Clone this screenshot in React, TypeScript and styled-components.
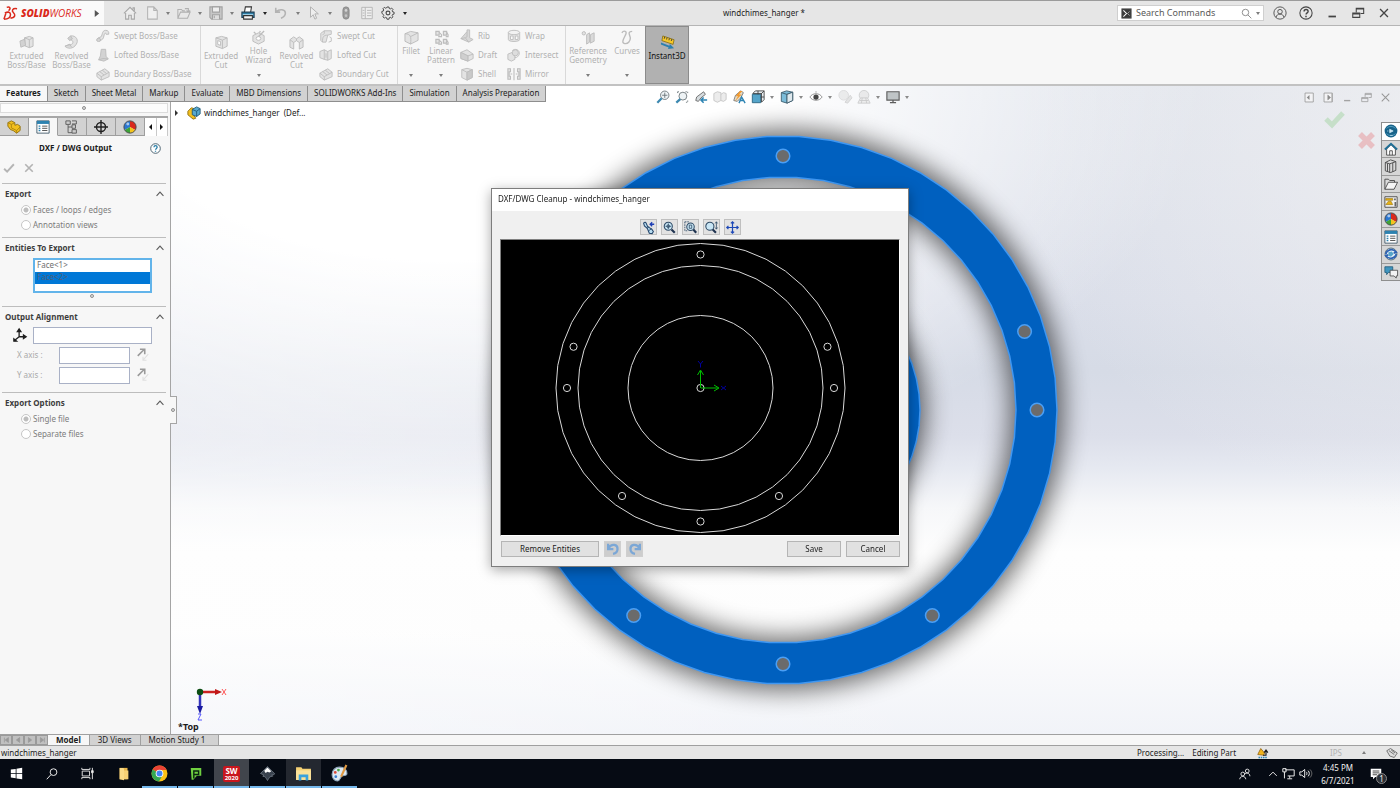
import React from "react";
import styled, { createGlobalStyle } from "styled-components";

const Global = createGlobalStyle`
  *, *::before, *::after { box-sizing: border-box; }
  html, body { margin: 0; }
  body { font: 8px/10px "Noto Sans", "Open Sans", sans-serif; color: #1c1c1c; background: #e6e6e6; }
  button, input, ul, h1, h2, fieldset { font: inherit; color: inherit; margin: 0; padding: 0; border: 0; }
  button { background: none; }
  ul { list-style: none; }
`;

/* ---------- drawings ---------- */

const Glyph = styled.svg<{ $s?: number }>`
  display: block;
  flex: none;
  width: ${(p) => p.$s ?? 14}px;
  height: ${(p) => p.$s ?? 14}px;
  fill: none;
  overflow: visible;
`;

const D = "#bcbcbc";
const L = "#e3e3e3";

const art: Record<string, React.ReactNode> = {
  home: <path d="M1 8.5 8 1.5l7 7M3 8v7h3.500v-4.500h3V15H13V8M11.500 4V2h1.500v3.500" stroke="#a6a6a6" fill="#ededed" strokeWidth="1.200" />,
  page: <path d="M3 1h7l4 4v10H3zM10 1v4h4" stroke="#b4b4b4" fill="#efefef" strokeWidth="1.200" />,
  openFolder: <path d="M1 14V4h4l1.500 1.500H9M1 14l3-7h11l-3 7zM9 3h4v3m-2-1 2 2 2-2" stroke="#b0b0b0" fill="#e8e8e8" strokeWidth="1.200" />,
  save: <g stroke="#a2a2a2" strokeWidth="1.200"><path d="M1 1h14v14H3l-2-2z" fill="#c6c6c6" /><path d="M4 1h8v6H4z" fill="#eee" /><path d="M4 15v-5h8v5M6 11v3" fill="#ddd" /></g>,
  print: <g strokeWidth="1.200"><path d="M4 7 5 1h7l-1 6" fill="#fff" stroke="#333" /><path d="M1 7h14v6H1z" fill="#2e7ea6" stroke="#1f3f55" /><path d="M2 10h12" stroke="#bfe2f2" /><path d="M3 11h10v4H3z" fill="#f7f7f7" stroke="#333" /></g>,
  undo: <path d="M2 2v5h5M2.500 6.500C6 3 13 3.500 13 8c0 4-3 5-5 6" stroke="#b3b3b3" strokeWidth="1.800" />,
  cursor: <path d="M4 1v12l3-3 2 5 2-1-2-5h4z" stroke="#b0b0b0" fill="#eee" strokeWidth="1.100" />,
  pill: <g><rect x="4.500" y="1" width="7" height="14" rx="3.500" fill="#9c9c9c" stroke="#858585" /><circle cx="8" cy="5" r="1.500" fill="#d5d5d5" /><circle cx="8" cy="11" r="1.500" fill="#c4c4c4" /></g>,
  listPage: <g stroke="#b2b2b2"><path d="M2 1.500h12v13H2z" fill="#eee" /><path d="M6 1.500v13M3 5h2M3 8h2M3 11h2M8 5h5M8 8h5M8 11h5" /></g>,
  gear: <g stroke="#4a4a4a" strokeWidth="1.300"><path d="M6.700 1h2.600l.4 1.900 1.400.6 1.700-1.100 1.800 1.800-1.100 1.700.6 1.400 1.900.4v2.600l-1.900.4-.6 1.400 1.100 1.700-1.800 1.800-1.700-1.100-1.400.6-.4 1.900H6.700l-.4-1.900-1.400-.6-1.700 1.100-1.800-1.800 1.100-1.700-.6-1.400L0 9.300V6.700l1.900-.4.6-1.400-1.100-1.700 1.800-1.800 1.700 1.100 1.400-.6z" transform="translate(1 .3) scale(.87)" /><circle cx="8" cy="8" r="2.200" /></g>,
  user: <g stroke="#555" strokeWidth="1.100"><circle cx="8" cy="8" r="7" /><circle cx="8" cy="6.500" r="2.600" /><path d="M3.500 13c.5-5 8.500-5 9 0" /></g>,
  help: <g stroke="#444" strokeWidth="1.200"><circle cx="8" cy="8" r="7" /><path d="M5.800 6.200c0-3 4.600-3 4.600 0 0 1.700-2.300 1.700-2.300 3.600" strokeWidth="1.600" /><path d="M8 11.200v1.600" strokeWidth="1.700" /></g>,
  helpBlue: <g stroke="#3f5866" strokeWidth="1.300"><circle cx="8" cy="8" r="7" fill="#fff" /><path d="M5.800 6.200c0-3 4.600-3 4.600 0 0 1.700-2.300 1.700-2.300 3.600M8 11.200v1.700" stroke="#2a7fa8" strokeWidth="1.900" /></g>,
  min: <path d="M4 12h8.500" stroke="#444" strokeWidth="2" />,
  restore: <path d="M2 8h8v5H2zM2 9h8M6 7V2.500h8.500v6H11M6 3.500h8.500" stroke="#444" strokeWidth="1.200" />,
  close: <path d="m3.500 3.500 9 9m0-9-9 9" stroke="#444" strokeWidth="1.500" />,
  minL: <path d="M3 12.500h9" stroke="#a3a3a3" strokeWidth="2" />,
  restoreL: <path d="M1 8h9v6H1zM1 9.500h9M6 7V2h9v6h-4M6 3.500h9" stroke="#9a9a9a" strokeWidth="1.100" />,
  closeL: <path d="m2.500 2.500 11 11m0-11-11 11" stroke="#979797" strokeWidth="1.500" />,
  paneL: <g><path d="M1.500 1.500h12v13h-12z" stroke="#999" strokeWidth="1.200" fill="#f3f3f5" /><path d="M8 4.500v7L4 8z" fill="#888" /></g>,
  paneR: <g><path d="M1.500 1.500h12v13h-12z" stroke="#999" strokeWidth="1.200" fill="#f3f3f5" /><path d="M7 4.500v7L11 8zM13 2v12" fill="#888" stroke="#999" /></g>,
  prompt: <g><path d="M1 1h14v14H1z" fill="#3a3a3a" stroke="#6a6a6a" /><path d="m3.500 3.500 4.500 4.500-4.500 4.500" stroke="#fff" strokeWidth="1.500" /><path d="m12.500 5-3 3 3 3" stroke="#ccc" /></g>,
  search: <g stroke="#8b8b8b" strokeWidth="1.400"><circle cx="6.500" cy="6.500" r="4.700" /><path d="m10 10 5 5" /></g>,
  chevron: <path d="m2.500 11 5.500-6 5.500 6" stroke="#5b5b5b" strokeWidth="1.700" />,
  check: <path d="m1.500 9 4 4 9-10" stroke="#b5b5b5" strokeWidth="2.500" />,
  cross: <path d="m3 3 10 10m0-10L3 13" stroke="#b3b3b3" strokeWidth="2.200" />,

  /* ribbon, disabled state */
  extrude: <g stroke={D}><path d="m6 3 5-1.500 4 1.500v9l-4 1.500-5-2z" fill={L} /><path d="M6 3v8.500M11 5v8.500M6 3l5 2 4-2" /><path d="m1 6.500 5-2 1 6.500-5 2z" fill="#d2d2d2" /></g>,
  revolve: <g stroke={D}><path d="M7 1c6-1 9 5 6 9-3 5-9 5-12 2l5-2c4 1 5-4 1-5z" fill={L} /><path d="M4 3.500 7 1l2 3-3 2zM1 12l5-2 2 2.500" fill="#d0d0d0" /></g>,
  sweep: <g stroke={D} strokeWidth="1.100"><path d="M1.500 13c0-3 1-3 3-3.500C8 9 6 1.500 11 1.500c3 0 4 2 3.500 4.500h-3C11 3.500 9.500 5 9 8c-.4 3-2 5-5 5z" fill={L} /><ellipse cx="3" cy="12.500" rx="2.300" ry="1.800" fill="#d5d5d5" /></g>,
  loft: <g stroke={D}><path d="M6 1.500h5l.5 8 2.500 3-5 2.500-6-1.500L5 9z" fill="#d3d3d3" /><path d="M3 13.500 8 12l6 .5" /></g>,
  boundary: <g stroke={D}><path d="m1 7 9-5 5 4v5l-9 4-5-4z" fill={L} /><path d="m1 7 5 4 9-5M6 11v4M4 5l5 4M7 3.500l5 4" /></g>,
  extrudeCut: <g stroke={D}><path d="m2 3 6-1.500L14 3v9l-5 2.500L2 12z" fill={L} /><path d="M2 3l7 2.500L14 3M9 5.500v9" /><path d="m4 6 3 1v4l-3-1z" fill="#fff" /></g>,
  hole: <g stroke={D}><path d="m2 6 6-3 6 3v6l-6 3-6-3z" fill={L} /><ellipse cx="8" cy="9" rx="2.500" ry="2" fill="#fff" /><path d="m8 7 6-6M3 2l2 2M10 1l-1 2" strokeWidth="1.400" /></g>,
  revolveCut: <g stroke={D}><path d="M1 5 5 2l3 2 3-2 4 3v8l-4 2V8L8 6 5 8v7l-4-2z" fill={L} /><path d="M1 5l4 3M15 5l-4 3M8 4v2" /></g>,
  sweepCut: <g stroke={D}><path d="m2 5 4-3h8v4l-4 1-2 8H4l-2-2z" fill={L} /><path d="M4 15c0-6 1-8 6-8M6 2v3L4 7M12 9l2 1v4l-3 1" /></g>,
  loftCut: <g stroke={D}><path d="m1 4 5-2v11l-5-2zM6 2l4 2v10l-4-1M10 4l4-2v10l-4 2" fill={L} /><path d="M8 6v5" /></g>,
  fillet: <g stroke={D}><path d="m1 4 6-2.500L15 3v8l-8 4-6-3z" fill={L} /><path d="M1 4c6 0 7 3 6 11M7 7l8-4" /></g>,
  pattern: <g stroke={D} strokeWidth="1.200"><path d="M2 1.500h3.500v4H2zM2 10h3.500v4H2zM10 1.500h3.500v4H10zM10 10h3.500v4H10z" fill={L} /><path d="M5.500 2.500 8 5v2H4.500M13.500 2.500 15 5v2h-2.500M5.500 11 8 13v2H4.500M13.500 11l1.500 2v2h-2.500" /></g>,
  rib: <g stroke={D}><path d="m1 11 7-8V1h3v9l4 2-5 3z" fill="#d8d8d8" /><path d="m1 11 5-1 4 5M8 3v6l-2 1" /></g>,
  draft: <g stroke={D}><path d="m1 5 7-3 7 5v5l-6 3-8-3z" fill={L} /><path d="m1 5 8 4 6-2M9 9v6" /><path d="m1 5 8 4v6l-8-3z" fill="#cfcfcf" /></g>,
  shell: <g stroke={D}><path d="m2 3 6-1.500L14 3v9l-6 3-6-3z" fill={L} /><path d="M2 3l6 3 6-3M8 6v9" /><path d="m8 6 6-3v9l-6 3z" fill="#c9c9c9" /></g>,
  wrap: <g stroke={D}><path d="M1.500 4v8c0 3 13 3 13 0V4" fill={L} /><ellipse cx="8" cy="4" rx="6.500" ry="2.500" fill="#f2f2f2" /><path d="M4 8h3v4H4zM9.500 8h3v4h-3z" fill="#fafafa" /></g>,
  intersect: <g stroke={D}><path d="m1 7 5-2 3 2v6l-4 2-4-2z" fill={L} /><path d="M6 3c3-3 9-1 8 4-1 3-3 4-5 4" /><circle cx="9.500" cy="5.500" r="3.500" fill="#ddd" /></g>,
  mirror: <g stroke={D} strokeWidth="1.200"><path d="M1 2h3v3.500H2.500v5H4V14H1zM15 2h-3v3.500h1.500v5H12V14h3z" fill={L} /><path d="M8 1v14M4 8h2M10 8h2" /></g>,
  refgeo: <g stroke={D}><circle cx="3" cy="3.500" r="1.800" fill={L} /><path d="m6 5 3-2v10l-3 2zM10 5l4-2v9l-4 2z" fill="#dadada" /></g>,
  curves: <path d="M2 3c2-3 6-2 4 2S1 14 5 14.500s6-3 6-6S7 2 13 1.500" stroke={D} strokeWidth="1.500" />,
  instant: <g><path d="m3 1 12 4-1 5-12-4z" fill="#f5c728" stroke="#7d6613" strokeWidth=".8" /><path d="m5 2-.5 2m3-1.200-.5 2m3-1.200-.5 2m3-1.200-.5 2" stroke="#333" strokeWidth=".9" /><path d="m1 8 9 3.500.5-2L15 14l-6.500 1 .7-1.800L1 10z" fill="#2c7fae" /></g>,

  /* panel tabs */
  part: <g strokeWidth="1"><path d="m1 3 4-2 4 2v3l3-1 3 2v5l-4 3-4-3-3-1-3-4z" fill="#f2bf1f" stroke="#8d6c0a" /><path d="m1 3 4 2 4-2M5 5v4l6 3 4-4M11 12v3" stroke="#a8820f" /></g>,
  props: <g><path d="M1 1h14v14H1z" fill="#fff" stroke="#3c5566" /><path d="M1 1h14v3.500H1z" fill="#2c82b0" /><path d="M3 7h2M3 9.500h2M3 12h2" stroke="#2c82b0" strokeWidth="1.500" /><path d="M7 7h6M7 9.500h6M7 12h6" stroke="#444" /></g>,
  config: <g stroke="#555"><path d="M3.500 4v10.500H8M3.500 8H8" /><path d="M1 1h5v4H1zM8 5.500h4v4H8zM8 11h5v4H8z" fill="#ccc" /><path d="M8 1h5v3.500H8" /></g>,
  target: <g stroke="#222" strokeWidth="1.600"><circle cx="8" cy="8" r="5.200" /><path d="M8 0v16M0 8h16" /></g>,
  ball: <g><circle cx="8" cy="8" r="7" fill="#ddd" /><path d="M8 8V1a7 7 0 0 1 6 10.500z" fill="#d9281c" /><path d="M8 8 2 11.500A7 7 0 0 1 8 1z" fill="#2b77d1" /><path d="m8 8 6 3.500A7 7 0 0 1 8 15z" fill="#f3c41d" /><path d="M8 8v7a7 7 0 0 1-6-3.500z" fill="#3da336" /><circle cx="8" cy="8" r="7" stroke="#444" /><circle cx="5.500" cy="4.500" r="1.700" fill="#ffffff99" /></g>,
  assembly: <g><path d="m1 6 4-4 3 1v8l2 3-3 1-6-5z" fill="#f2bf1f" stroke="#8d6c0a" /><path d="m6 4 5-3 4 2v6l-4 3-5-2z" fill="#58a9cf" stroke="#1f5875" /><path d="m6 4 5 2 4-3M11 6v6" stroke="#1f5875" /></g>,
  origin: <g stroke="#1f1f1f" strokeWidth="1.500"><path d="M7 10V2M7 10h7M7 10l-5 4" /><path d="m5 4 2-3 2 3zM12 8l3 2-3 2zM1 12.500V15h3z" fill="#1f1f1f" /></g>,
  flip: <g strokeWidth="1.800"><path d="m2 9 7-7M4.500 1.500H10V7" stroke="#9a9a9a" /><path d="m14 7-6 7m0-4v4h4" stroke="#e0e0e0" strokeWidth="1.300" /></g>,

  /* heads-up toolbar */
  zoomFit: <g stroke="#6a7377"><circle cx="10" cy="6" r="4.800" fill="#eef3f5" /><path d="M10 3v6M7 6h6" /><path d="m6.500 9.500-5 5" stroke="#3c88b0" strokeWidth="2.600" /></g>,
  zoomArea: <g stroke="#6a7377"><path d="M3 2h2M3 2v2M12 2h2.500v2M14.500 12v2H12" strokeDasharray="1.500 1" /><circle cx="9" cy="7" r="4.500" fill="#eef3f5" /><path d="m6 10.500-4.500 4" stroke="#3c88b0" strokeWidth="2.600" /></g>,
  prevView: <g><path d="M11 2 3 8l-1 4 3 1 3-4 5-4z" fill="#d6dcdf" stroke="#666" /><path d="M15 11.500H8m3-3-3 3 3 3" stroke="#2d84b3" strokeWidth="1.800" /></g>,
  section: <g stroke="#c5c5c5"><path d="m1 4 4-2 4 1v9l-4 2-4-2zM9 5l3-2 3 1v7l-3 2-3-1" fill="#ececec" /></g>,
  dynamic: <g><path d="M10 1 4 6l-2 6 4 1 4-4 3-6z" fill="#e6dcc8" stroke="#777" /><path d="m9 1-5 6h3l-4 6 8-8H8l4-4z" fill="#f29a2e" /><path d="m8 15 3-7 4 7M9 12h4" stroke="#2d84b3" strokeWidth="1.600" /></g>,
  orient: <g stroke="#444"><path d="M5 1h10v10l-3 3V4H2z" fill="#e8edf0" /><path d="M1.500 5h9.500v9.500H1.500z" fill="#55a4c9" stroke="#27617f" /><path d="M11 5l4-4M8 1v4M11 8h4" /></g>,
  display: <g stroke="#3b5a6a"><path d="m1.500 3 6-2 7 1.500v9.500L8 15l-6.500-2z" fill="#7cbcd9" /><path d="M1.500 3 8 5l6.500-2.500M8 5v10" /><path d="M8 5l6.500-2.500V12L8 15z" fill="#dfe9ee" /></g>,
  eye: <g><path d="M1 8c3-5 11-5 14 0-3 5-11 5-14 0z" fill="#fff" stroke="#888" /><circle cx="8" cy="8" r="3" fill="#454545" /><path d="M8 1.500V3" stroke="#888" /></g>,
  appear: <g opacity=".5"><circle cx="6.500" cy="6" r="5.500" fill="#ddd" stroke="#bbb" /><path d="m8 14 6-8 2 3-5 6z" fill="#cfcfcf" stroke="#aaa" /></g>,
  sceneArt: <g opacity=".55"><circle cx="8" cy="6" r="5.500" fill="#ddd" stroke="#aaa" /><path d="M1 15 4 9h8l3 6z" fill="#e5e5e5" stroke="#a5a5a5" /><path d="m6 9-1 6M10 9l1 6M3 12h10" stroke="#a5a5a5" /></g>,
  monitor: <g><path d="M1 2h14v9.500H1z" fill="#bfc4c6" stroke="#5e5e5e" strokeWidth="1.300" /><path d="M8 11.500V14M4.500 14.500h7" stroke="#5e5e5e" strokeWidth="1.500" /></g>,

  /* task pane */
  globe: <g><circle cx="8" cy="8" r="7.300" fill="#17638a" /><path d="M3 5c3-3 7-3 10 0M3 11c3 3 7 3 10 0" stroke="#5aa5c6" /><path d="m6.500 6 4 2-4 2zM7 13h3M3.500 8h1.500" fill="#cfe8f3" stroke="#cfe8f3" strokeWidth=".8" /></g>,
  homeBlue: <g><path d="M3 8v7h10V8L8 3z" fill="#fff" stroke="#444" /><path d="M1 8.500 8 2l7 6.500" stroke="#1f6f96" strokeWidth="2.200" /><path d="M6.500 15v-5h3v5" stroke="#444" /></g>,
  books: <g stroke="#444"><path d="m1.500 4 6-3 6 2v10l-6 2.500-6-2z" fill="#d9d9d9" /><path d="m1.500 4 5 1.500 7-2.500M6.500 5.500v10M4 5v9M10 4.500v10" /></g>,
  folderOut: <g stroke="#444"><path d="M1 14V2.500h4L6.500 4H12v3" fill="#dcdcdc" /><path d="m1 14 4-8h10.500l-4 8z" fill="#f5f5f5" /></g>,
  palette: <g><path d="M1 2h14v12H1z" fill="#f2f2f2" stroke="#444" /><path d="M2 4h8v2H2zM5 7h3l2 4H2z" fill="#e6b011" stroke="#8a6a09" strokeWidth=".6" /><path d="M11.500 4h2v2h-2zM12 8h2v5h-2z" fill="#666" /></g>,
  forum: <g strokeWidth=".9"><path d="M1 2h9v6.500H5L3 11V8.500H1z" fill="#4096bf" stroke="#1f5875" /><path d="M7 6h8.500v6.500H14V15l-2.500-2.500H7z" fill="#f3f3f3" stroke="#444" /></g>,
  sync: <g><circle cx="8" cy="8" r="6.800" fill="#e8f1f6" stroke="#44606f" /><path d="M2 8c1-5 8-7 12-2l-3 1M14 8c-1 5-8 7-12 2l3-1" stroke="#2d62b3" strokeWidth="2" /><path d="m5 6 4-1 2 3-3 3-3-1z" fill="#55a4c9" /></g>,

  /* dialog toolbar */
  eraseView: <g><path d="M2 2.500c1.500-1.500 3-1 3.500 1L7 7l5 3 2 3-1.500 2.500L9 15 6.500 9 3 6z" fill="#b8dcf0" stroke="#22456b" strokeWidth="1.300" /><path d="m6.500 9 2-2.500M8 12l4-2.500" stroke="#22456b" /><path d="M15 4h-5m2.500-2.500L10 4l2.500 2.500" stroke="#1f3fb5" strokeWidth="1.600" /></g>,
  zFit: <g stroke="#2f4b66"><circle cx="6.500" cy="6.500" r="5" fill="#c9e6f5" strokeWidth="1.300" /><path d="M6.500 3v7M3 6.500h7" /><circle cx="6.500" cy="6.500" r="1.700" /><path d="m10.500 10.500 4 4" stroke="#1f3350" strokeWidth="2.600" /></g>,
  zArea: <g stroke="#2f4b66"><path d="M1 1h5M1 1v11h3" strokeDasharray="2 1" /><circle cx="8" cy="7" r="4.600" fill="#c9e6f5" strokeWidth="1.300" /><path d="M6.500 5h3v4h-3z" /><path d="m11.500 10.500 3.500 4" stroke="#1f3350" strokeWidth="2.600" /></g>,
  zInOut: <g stroke="#2f4b66"><circle cx="6" cy="6.500" r="5" fill="#c9e6f5" strokeWidth="1.300" /><path d="m9.500 10.500 4 4" stroke="#1f3350" strokeWidth="2.600" /><path d="M14 1v9M12.500 3 14 1l1.500 2M12.500 8l1.500 2 1.500-2" /></g>,
  pan: <g stroke="#1e49b8" strokeWidth="1.500"><path d="M8 1v14M1 8h14M6 3l2-2 2 2M6 13l2 2 2-2M3 6 1 8l2 2M13 6l2 2-2 2" /></g>,
  undoB: <path d="M1.500 1v7h7M2 7C6 0 14.500 2 14 8c0 4-3 6-6 6.500" stroke="#7ba7d6" strokeWidth="3" />,
  redoB: <path d="M14.500 1v7h-7M14 7C10 0 1.500 2 2 8c0 4 3 6 6 6.500" stroke="#7ba7d6" strokeWidth="3" />,

  /* status bar and taskbar */
  rebuild: <g><path d="m1 10 4-8 5 6-1 3z" fill="#f2b51d" stroke="#8d5c0a" /><path d="M8 11h4V5m-2.500 2.500L12 4l2.500 3.500" stroke="#1c1c1c" strokeWidth="1.500" /><path d="M2 14h12" stroke="#2d84b3" strokeWidth="2" strokeDasharray="2 1" /></g>,
  tag: <g stroke="#555"><path d="m1 5 5-3 9 6-4 6-6-2z" fill="#ddd" /><path d="m4 5 7 5M7 4l5 4" /></g>,
  windows: <path d="M1 3.200 7 2.400v5.200H1zM8 2.200 15 1v6.600H8zM1 8.500h6v5.200L1 12.900zM8 8.500h7V15l-7-1z" fill="#fff" />,
  searchW: <g stroke="#eee" strokeWidth="1.300"><circle cx="10" cy="5.500" r="4.500" /><path d="m6.500 9-5.500 6" /></g>,
  taskview: <g stroke="#ddd" strokeWidth="1.200"><path d="M1.500 5h9v6h-9zM1 1v2h10V1M1 15v-2h10v2M14 1v14" /><path d="M13 4.500h2v2.500h-2z" fill="#fff" /></g>,
  folder: <g><path d="M3 1h9v13H3z" fill="#e9b84c" /><path d="M3 1h4l1 1v13l-5-1z" fill="#fbdc87" /><path d="M8 4h5v10H8z" fill="#f7d275" /></g>,
  chrome: <g><circle cx="8" cy="8" r="7.500" fill="#fbc116" /><path d="M8 8 1.500 4.300A7.500 7.500 0 0 1 14.700 4.600H8z" fill="#ea4335" /><path d="M8 8 1.500 4.300A7.500 7.500 0 0 0 7.500 15.500l3.500-6z" fill="#34a853" /><circle cx="8" cy="8" r="3.600" fill="#fff" /><circle cx="8" cy="8" r="2.800" fill="#4285f4" /></g>,
  greenP: <g><path d="M2 1h12v9H9l-4 4.500H3z" fill="#6fd040" /><path d="M5.500 13V4.500H11v4H6" stroke="#0b2410" strokeWidth="1.600" /></g>,
  inkscape: <g><path d="M8 .5 15.500 8c.5 1-1 1.500-3 1.500l1 1.500-3 .5L8 15.500l-2.500-4L3 11l1-1.500L.5 8z" fill="#39424e" stroke="#8b96a3" strokeWidth=".6" /><path d="m8 1.500 4 4-2 1.500-2-1-2 1.500L4.500 5z" fill="#fff" /></g>,
  explorer: <g><path d="M1 2h5l1 1.500h8V14H1z" fill="#f6d274" /><path d="M1 5h14v9H1z" fill="#fbe29a" /><path d="M3.500 9h9v5.500h-2.500v-3H6v3H3.500z" fill="#3aa2dc" /></g>,
  paint: <g><path d="M8 2c5 0 7 3 7 6 0 2-2 2-4 2s-2 5-5 5c-3 0-5-3-5-6 0-4 3-7 7-7z" fill="#dfeaf3" stroke="#8fa7bb" /><circle cx="4" cy="7" r="1.300" fill="#d94a3a" /><circle cx="7" cy="4.800" r="1.300" fill="#4ba84b" /><circle cx="4.500" cy="11" r="1.300" fill="#3a7fd0" /><path d="m14.500 0-5 11" stroke="#e09a45" strokeWidth="2" /></g>,
  people: <g stroke="#eee" strokeWidth="1.200"><circle cx="11" cy="4" r="2.500" /><circle cx="5" cy="8" r="2.500" /><path d="M7.500 8.500c2-3 7-2 7 2.500M1 15c0-5 8-5 8 0" /></g>,
  up: <path d="m2 11 6-6 6 6" stroke="#eee" strokeWidth="1.500" />,
  net: <g stroke="#eee" strokeWidth="1.200"><path d="M4 3.500h11v7.500H7M9.500 11v3M6.500 14.500h6M1 2h4v4H1zM3 6v8" /></g>,
  sound: <g stroke="#eee" strokeWidth="1.200"><path d="M1 6v4h2.500L7 13V3L3.500 6z" /><path d="M9 6c1 1 1 3 0 4M11.200 4.500c2 2 2 5 0 7" /><path d="M13.500 3c3 3 3 7 0 10" stroke="#777" /></g>,
  note: <g><path d="M1 1h14v11H7l-3 3v-3H1z" fill="#fff" /><path d="M3.500 4h9M3.500 6.500h9M3.500 9h6" stroke="#111" /></g>,
};

const Icon = ({ n, s }: { n: string; s?: number }) => (
  <Glyph $s={s} viewBox="0 0 16 16" aria-hidden="true">
    {art[n]}
  </Glyph>
);

const Caret = styled.i<{ $c?: string }>`
  flex: none;
  width: 0;
  height: 0;
  border: 2px solid transparent;
  border-top: 3px solid ${(p) => p.$c ?? "#7d7d7d"};
  border-bottom: 0;
`;

/* ---------- frame ---------- */

const Shell = styled.div`
  display: flex;
  flex-direction: column;
  min-height: 100vh;
`;

const TitleBar = styled.header`
  display: flex;
  align-items: center;
  height: 26px;
  padding-right: 3px;
  border-top: 1px solid #9b9b9b;
  border-bottom: 1px solid #b5b5b5;
  background: #e6e6e6;
`;

const Brand = styled.div`
  display: flex;
  align-items: center;
  gap: 3px;
  width: 104px;
  height: 24px;
  padding-left: 3px;
  background: #fafafa;
  color: #da291c;
  font: italic 900 10px/14px "Open Sans", sans-serif;
  white-space: nowrap;
  svg:last-child { margin-left: auto; margin-right: 4px; }
`;

const BrandLight = styled.span`
  font-weight: 400;
`;

const QuickBar = styled.div`
  display: flex;
  align-items: center;
  margin-left: 14px;
`;

const QuickButton = styled.button<{ $w: number }>`
  display: flex;
  align-items: center;
  justify-content: center;
  width: ${(p) => p.$w}px;
  height: 20px;
`;

const QuickCaret = styled.button`
  display: flex;
  align-items: center;
  justify-content: center;
  width: 13px;
  height: 20px;
`;

const DocTitle = styled.h1`
  flex: 1;
  text-align: center;
  font-weight: 400;
`;

const SearchBox = styled.label`
  display: flex;
  align-items: center;
  gap: 4px;
  width: 147px;
  height: 16px;
  margin-right: 3px;
  padding: 0 3px;
  border: 1px solid #cfcfcf;
  background: #fff;
`;

const SearchInput = styled.input`
  && {
    flex: 1;
    min-width: 0;
    outline: 0;
    background: none;
    font-size: 9px;
  }
  &::placeholder { color: #5a5a5a; opacity: 1; }
`;

const WinButton = styled.button`
  display: flex;
  align-items: center;
  justify-content: center;
  width: 26px;
  height: 22px;
`;

/* ---------- ribbon ---------- */

const Ribbon = styled.nav`
  display: flex;
  height: 58px;
  background: #f7f7f7;
`;

const Group = styled.div`
  display: flex;
  border-right: 1px solid #d9d9d9;
  &:first-child { padding-left: 4px; }
  &:last-child { border-right: 0; }
`;

const BigButton = styled.button<{ $w: number; $top?: boolean }>`
  display: flex;
  flex-direction: column;
  align-items: center;
  gap: 1px;
  width: ${(p) => p.$w}px;
  padding: ${(p) => (p.$top ? "4px 0 7px" : "9px 0 7px")};
  color: #b1b1b1;
  line-height: 9px;
  text-align: center;
  ${Caret} { margin-top: auto; }
`;

const Instant = styled(BigButton)`
  margin-left: 1px;
  padding-top: 8px;
  border: 1px solid #8b8b8b;
  background: #b1b1b1;
  color: #111;
`;

const SmallList = styled.div<{ $w: number }>`
  display: flex;
  flex-direction: column;
  justify-content: space-around;
  width: ${(p) => p.$w}px;
  margin-left: 2px;
`;

const SmallButton = styled.button`
  display: flex;
  align-items: center;
  gap: 4px;
  height: 18px;
  color: #b1b1b1;
  white-space: nowrap;
`;

/* ---------- workspace ---------- */

const Workspace = styled.main`
  flex: 1;
  display: grid;
  grid-template: 16px 1fr / 171px 1fr;
  border-top: 2px solid #c2c2c2;
`;

const Tabs = styled.div`
  grid-area: 1 / 1 / 2 / 3;
  z-index: 1;
  justify-self: start;
  display: flex;
  border-bottom: 1px solid #8e8e8e;
`;

const Tab = styled.button<{ $on?: boolean }>`
  padding: 0 6px 2px;
  border-right: 1px solid #8e8e8e;
  background: ${(p) => (p.$on ? "#f7f7f7" : "#d2d2d2")};
  font-weight: ${(p) => (p.$on ? 700 : 400)};
  white-space: nowrap;
`;

const Panel = styled.aside`
  grid-area: 2 / 1 / 3 / 2;
  position: relative;
  border-right: 1px solid #a5a5a5;
  background: #f7f7f7;
`;

const Grip = styled.div`
  display: flex;
  align-items: center;
  justify-content: center;
  height: 10px;
  margin: 1px 2px 3px 0;
  border: 1px solid #dcdcdc;
  background: #fcfcfc;
`;

const Dot = styled.i`
  width: 4px;
  height: 4px;
  border: 1px solid #8f8f8f;
  border-radius: 50%;
  background: #ddd;
`;

const PanelTabs = styled.div`
  display: flex;
  height: 20px;
  margin-right: 2px;
  border-top: 2px solid #a7a7a7;
`;

const PanelTab = styled.button<{ $on?: boolean }>`
  display: flex;
  align-items: center;
  justify-content: center;
  width: 29px;
  border-right: 1px solid #9e9e9e;
  border-bottom: 1px solid ${(p) => (p.$on ? "#f7f7f7" : "#9e9e9e")};
  background: ${(p) => (p.$on ? "#f7f7f7" : "#d2d2d2")};
`;

const PanelScroll = styled.button<{ $dir: "left" | "right" }>`
  display: flex;
  align-items: center;
  justify-content: center;
  flex: 1;
  border-right: 1px solid #c9c9c9;
  background: #fff;
  &::before {
    content: "";
    border: 3px solid transparent;
    border-${(p) => (p.$dir === "left" ? "right" : "left")}-color: #111;
    border-${(p) => p.$dir}-width: 0;
  }
`;

const PanelHead = styled.div`
  display: grid;
  grid-template-columns: 1fr 12px;
  align-items: center;
  height: 24px;
  padding-right: 8px;
  h2 { padding-left: 1px; text-align: center; font-weight: 700; }
`;

const Confirm = styled.div`
  display: flex;
  align-items: flex-start;
  gap: 8px;
  height: 23px;
  padding: 2px 0 0 3px;
`;

const Section = styled.section<{ $h: number }>`
  height: ${(p) => p.$h}px;
  margin: 0 4px 0 2px;
  border-top: 1px solid #bdbdbd;
`;

const SectionHead = styled.button`
  display: flex;
  align-items: center;
  justify-content: space-between;
  width: 100%;
  height: 18px;
  padding: 2px 1px 0 3px;
  color: #3d3d3d;
  font-weight: 700;
`;

const Choice = styled.label`
  display: flex;
  align-items: center;
  gap: 2px;
  height: 15px;
  padding-left: 19px;
  color: #7c7c7c;
  input {
    appearance: none;
    width: 10px;
    height: 10px;
    border: 1px solid #c6c6c6;
    border-radius: 50%;
    background: #fff;
  }
  input:checked { background: radial-gradient(#bdbdbd 0 2px, #fff 3px); }
`;

const EntityList = styled.ul`
  width: 119px;
  height: 35px;
  margin: 2px 0 1px 31px;
  border: 2px solid #62b4ea;
  background: #fff;
  color: #6f6f6f;
`;

const Entity = styled.li<{ $on?: boolean }>`
  height: 12px;
  padding-left: 2px;
  line-height: 10px;
  background: ${(p) => (p.$on ? "#0078d7" : "transparent")};
  color: ${(p) => (p.$on ? "#4c5f78" : "inherit")};
`;

const DotRow = styled.div`
  display: flex;
  justify-content: center;
  padding-left: 16px;
`;

const AxisRow = styled.label`
  display: flex;
  align-items: center;
  height: 20px;
  padding-left: 11px;
  color: #a9a9a9;
`;

const AxisName = styled.span<{ $w: number }>`
  width: ${(p) => p.$w}px;
  padding-left: ${(p) => (p.$w > 30 ? 4 : 0)}px;
`;

const Field = styled.input<{ $w: number }>`
  && {
    width: ${(p) => p.$w}px;
    height: 17px;
    margin-right: 6px;
    border: 1px solid #a9b1c6;
    background: #fff;
  }
`;

const Handle = styled.button`
  position: absolute;
  left: 170px;
  top: calc(50% - 22px);
  z-index: 1;
  display: flex;
  align-items: center;
  justify-content: center;
  width: 7px;
  height: 28px;
  border: 1px solid #a5a5a5;
  border-left: 0;
  background: #f7f7f7;
`;

const Viewport = styled.section`
  grid-area: 1 / 2 / 3 / 3;
  position: relative;
  overflow: hidden;
  display: flex;
  align-items: center;
  justify-content: center;
  background:
    linear-gradient(90deg, rgba(255, 255, 255, 0.4), rgba(255, 255, 255, 0) 65%),
    radial-gradient(ellipse 40% 60% at 108% 8%, rgba(240, 240, 242, 0.9), rgba(240, 240, 242, 0)),
    radial-gradient(ellipse 62% 64% at 22% 0%, #fff 0 42%, rgba(255, 255, 255, 0)),
    linear-gradient(#e0e4ec 0, #dadee9 33%, #d6dbe6 44%, #dcdfea 54%, #e6e9f1 59%, #f6f7f9 65%, #fefefe 72%, #fdfdfd 84%, #f1f3f8);
`;

const Model = styled.svg`
  flex: none;
  width: 640px;
  height: 640px;
  margin: 0 5px 1px 0;
  overflow: visible;
`;

const Hud = styled.div`
  position: absolute;
  top: 3px;
  left: 0;
  right: 6px;
  display: flex;
  justify-content: center;
`;

const HudButton = styled.button`
  display: flex;
  align-items: center;
  justify-content: center;
  width: 19px;
  height: 16px;
`;

const HudCaret = styled.button`
  display: flex;
  align-items: center;
  justify-content: center;
  width: 10px;
  height: 16px;
`;

const DocControls = styled.div`
  position: absolute;
  top: 3px;
  right: 5px;
  display: flex;
`;

const TreeRoot = styled.button`
  position: absolute;
  top: 18px;
  left: 4px;
  display: flex;
  align-items: center;
  height: 17px;
  color: #222;
  svg { margin: 0 3px 0 9px; }
  &::before {
    content: "";
    border: 3px solid transparent;
    border-left-color: #333;
    border-right-width: 0;
  }
`;

const Corner = styled.svg`
  position: absolute;
  top: 24px;
  right: 24px;
  width: 54px;
  height: 42px;
`;

const TaskPane = styled.nav`
  position: absolute;
  top: 36px;
  right: 0;
  display: flex;
  flex-direction: column;
  width: 19px;
  height: 159px;
  border: 1px solid #8e8e8e;
  border-right: 0;
`;

const PaneButton = styled.button<{ $on?: boolean }>`
  flex: 1;
  display: flex;
  align-items: center;
  justify-content: center;
  min-height: 0;
  background: ${(p) => (p.$on ? "#fff" : "#d6d6d6")};
  & + & { border-top: 1px solid #9a9a9a; }
`;

const Triad = styled.div`
  position: absolute;
  left: 7px;
  bottom: 2px;
  font-size: 9px;
  font-weight: 700;
  svg { display: block; }
`;

/* ---------- bottom bars ---------- */

const ModelTabs = styled.div`
  display: flex;
  height: 12px;
  border-top: 1px solid #a0a0a0;
  border-bottom: 1px solid #a0a0a0;
  background: #f7f7f7;
`;

const NavButton = styled.button`
  width: 12px;
  border: 1px solid #9a9a9a;
  background: #c0c0c0;
  svg { margin: auto; }
`;

const ModelTab = styled.button<{ $on?: boolean }>`
  padding: 0 8px 1px;
  border-right: 1px solid #a0a0a0;
  background: ${(p) => (p.$on ? "#f7f7f7" : "#d2d2d2")};
  font-weight: ${(p) => (p.$on ? 700 : 400)};
  &:last-child { padding-right: 13px; }
`;

const StatusBar = styled.footer`
  display: flex;
  align-items: center;
  height: 13px;
  padding: 0 2px 0 1px;
  background: #e6e6e6;
`;

const StatusText = styled.span<{ $r?: number; $dim?: boolean }>`
  margin-right: ${(p) => p.$r ?? 0}px;
  color: ${(p) => (p.$dim ? "#b3b3b3" : "#1c1c1c")};
  &:first-child { margin-right: auto; }
`;

const UnitsCaret = styled(Caret)`
  margin: 0 20px;
  transform: rotate(180deg);
`;

const TaskBar = styled.nav`
  display: flex;
  align-items: center;
  height: 29px;
  background: #060b14;
  color: #f3f3f3;
`;

const Task = styled.button<{ $run?: boolean; $active?: number }>`
  display: flex;
  align-items: center;
  justify-content: center;
  width: 36px;
  height: 29px;
  background: ${(p) => (p.$active ? `rgba(255,255,255,${p.$active / 100})` : "none")};
  background-clip: padding-box;
  box-shadow: ${(p) => (p.$run ? "inset 0 -2px #76b9ed" : "none")};
  &:first-child { width: 33px; }
  & + & { border-left: 1px solid transparent; }
`;

const SwTile = styled.span`
  display: flex;
  flex-direction: column;
  align-items: center;
  width: 17px;
  height: 16px;
  border-radius: 2px;
  background: #c8161d;
  color: #fff;
  font-weight: 700;
  line-height: 9px;
  small { font-size: 6px; line-height: 7px; }
`;

const Tray = styled.div`
  display: flex;
  align-items: center;
  margin-left: auto;
  gap: 4px;
`;

const TrayButton = styled.button<{ $r?: number }>`
  position: relative;
  margin-right: ${(p) => p.$r ?? 0}px;
`;

const Clock = styled.time`
  width: 36px;
  margin-right: 10px;
  line-height: 13px;
  text-align: center;
  white-space: nowrap;
`;

const Badge = styled.b`
  position: absolute;
  left: 6px;
  top: 5px;
  width: 11px;
  height: 11px;
  border: 1px solid #888;
  border-radius: 50%;
  background: #2b2f36;
  font-weight: 400;
  line-height: 9px;
  text-align: center;
`;

/* ---------- dialog ---------- */

const Overlay = styled.div`
  position: fixed;
  inset: 0 0 33px;
  z-index: 5;
  display: flex;
  align-items: center;
  justify-content: center;
`;

const Dialog = styled.section`
  width: 418px;
  border: 1px solid #7d7d7d;
  background: #f0f0f0;
  box-shadow: 0 3px 12px rgba(0, 0, 0, 0.35);
`;

const DialogTitle = styled.h2`
  && {
    height: 22px;
    padding-left: 6px;
    background: #fff;
    font-weight: 400;
    line-height: 20px;
  }
`;

const DialogTools = styled.div`
  display: flex;
  justify-content: center;
  gap: 4px;
  padding: 8px 19px 4px 0;
`;

const ToolButton = styled.button<{ $off?: boolean }>`
  display: flex;
  align-items: center;
  justify-content: center;
  width: 17px;
  height: 16px;
  border: 1px solid ${(p) => (p.$off ? "#cfcfcf" : "#bfbfbf")};
  background: ${(p) => (p.$off ? "#cdcdcd" : "#e2e2e2")};
`;

const Preview = styled.svg`
  display: block;
  width: 400px;
  height: 297px;
  margin: 0 8px;
  border: 1px solid;
  border-color: #808080 #fff #fff #808080;
  background: #000;
`;

const DialogActions = styled.div`
  display: flex;
  gap: 5px;
  padding: 5px 8px 9px 9px;
`;

const ActionButton = styled.button<{ $w: number; $end?: boolean }>`
  width: ${(p) => p.$w}px;
  height: 16px;
  margin-left: ${(p) => (p.$end ? "auto" : 0)};
  border: 1px solid #b5b5b5;
  background: #e1e1e1;
`;

/* ---------- data ---------- */

const ring = (cx: number, cy: number, r: number, sides: number) =>
  Array.from({ length: sides }, (_, i) => {
    const a = (i * 2 * Math.PI) / sides;
    return `${i ? "L" : "M"}${(cx + r * Math.cos(a)).toFixed(2)} ${(cy + r * Math.sin(a)).toFixed(2)}`;
  }).join("") + "Z";

/* hole directions on the bolt circle, in degrees clockwise from +x */
const holes = [-90, -18, -162, 0, 180, 54, 126, 90];
const onCircle = (cx: number, cy: number, r: number, deg: number) => ({
  cx: cx + r * Math.cos((deg * Math.PI) / 180),
  cy: cy + r * Math.sin((deg * Math.PI) / 180),
});

const quick: [string, number, boolean, string?][] = [
  ["home", 24, false], ["page", 19, true], ["openFolder", 19, true], ["save", 19, true],
  ["print", 20, true, "#222"], ["undo", 20, true], ["cursor", 19, true], ["pill", 20, false],
  ["listPage", 22, false], ["gear", 20, true, "#222"],
];
const tabs = ["Features", "Sketch", "Sheet Metal", "Markup", "Evaluate", "MBD Dimensions", "SOLIDWORKS Add-Ins", "Simulation", "Analysis Preparation"];
const hud: [string, boolean][] = [
  ["zoomFit", false], ["zoomArea", false], ["prevView", false], ["section", false], ["dynamic", false],
  ["orient", true], ["display", true], ["eye", true], ["appear", false], ["sceneArt", true], ["monitor", true],
];
const pane = ["globe", "homeBlue", "books", "folderOut", "palette", "ball", "props", "sync", "forum"];
const navArrows = ["M3 2v6M8 2 4 5l4 3z", "M7 2 3 5l4 3z", "M3 2l4 3-4 3z", "M8 2v6M3 2l4 3-4 3z"];

const Big = ({ icon, text, w, top, caret }: { icon: string; text: string[]; w: number; top?: boolean; caret?: boolean }) => (
  <BigButton $w={w} $top={top}>
    <Icon n={icon} s={15} />
    <span>{text.map((t) => <React.Fragment key={t}>{t}<br /></React.Fragment>)}</span>
    {caret && <Caret />}
  </BigButton>
);

const Smalls = ({ w, items }: { w: number; items: [string, string][] }) => (
  <SmallList $w={w}>
    {items.map(([icon, text]) => (
      <SmallButton key={text}><Icon n={icon} />{text}</SmallButton>
    ))}
  </SmallList>
);

const Head = ({ children }: { children: string }) => (
  <SectionHead>{children}<Icon n="chevron" s={10} /></SectionHead>
);

export default function App() {
  return (
    <Shell>
      <Global />
      <TitleBar>
        <Brand>
          <Glyph $s={15} viewBox="0 0 16 16">
            <path d="M4 1.500c3-1 5 .5 2 3.500M1 14c5 0 7-2 7-5S5 6 2 7.500l4-1M3 8l-2 6M15 3c-5-1-6 2-4 4s3 5-3 6" stroke="#da291c" strokeWidth="1.600" />
          </Glyph>
          <span>SOLID<BrandLight>WORKS</BrandLight></span>
          <Glyph $s={7} viewBox="0 0 8 8"><path d="M2 0v8l5-4z" fill="#555" /></Glyph>
        </Brand>
        <QuickBar>
          {quick.map(([n, w, c, col]) => (
            <React.Fragment key={n}>
              <QuickButton $w={w} aria-label={n}><Icon n={n} /></QuickButton>
              {c && <QuickCaret aria-label={`${n} options`}><Caret $c={col} /></QuickCaret>}
            </React.Fragment>
          ))}
        </QuickBar>
        <DocTitle>windchimes_hanger *</DocTitle>
        <SearchBox>
          <Icon n="prompt" s={11} />
          <SearchInput placeholder="Search Commands" aria-label="Search Commands" />
          <Icon n="search" s={11} />
          <Caret />
        </SearchBox>
        {["user", "help", "min", "restore", "close"].map((n) => (
          <WinButton key={n} aria-label={n}><Icon n={n} /></WinButton>
        ))}
      </TitleBar>

      <Ribbon>
        <Group>
          <Big icon="extrude" text={["Extruded", "Boss/Base"]} w={45} />
          <Big icon="revolve" text={["Revolved", "Boss/Base"]} w={45} />
          <Smalls w={104} items={[["sweep", "Swept Boss/Base"], ["loft", "Lofted Boss/Base"], ["boundary", "Boundary Boss/Base"]]} />
        </Group>
        <Group>
          <Big icon="extrudeCut" text={["Extruded", "Cut"]} w={40} />
          <Big icon="hole" text={["Hole", "Wizard"]} w={35} top caret />
          <Big icon="revolveCut" text={["Revolved", "Cut"]} w={41} />
          <Smalls w={78} items={[["sweepCut", "Swept Cut"], ["loftCut", "Lofted Cut"], ["boundary", "Boundary Cut"]]} />
        </Group>
        <Group>
          <Big icon="fillet" text={["Fillet"]} w={26} top caret />
          <Big icon="pattern" text={["Linear", "Pattern"]} w={34} top caret />
          <Smalls w={45} items={[["rib", "Rib"], ["draft", "Draft"], ["shell", "Shell"]]} />
          <Smalls w={58} items={[["wrap", "Wrap"], ["intersect", "Intersect"], ["mirror", "Mirror"]]} />
        </Group>
        <Group>
          <Big icon="refgeo" text={["Reference", "Geometry"]} w={44} top caret />
          <Big icon="curves" text={["Curves"]} w={34} top caret />
          <Instant $w={44}><Icon n="instant" s={15} />Instant3D</Instant>
        </Group>
      </Ribbon>

      <Workspace>
        <Tabs>
          {tabs.map((t, i) => <Tab key={t} $on={i === 0}>{t}</Tab>)}
        </Tabs>

        <Panel>
          <Grip><Dot /></Grip>
          <PanelTabs>
            {["part", "props", "config", "target", "ball"].map((n) => (
              <PanelTab key={n} $on={n === "props"} aria-label={n}><Icon n={n} /></PanelTab>
            ))}
            <PanelScroll $dir="left" aria-label="Previous tabs" />
            <PanelScroll $dir="right" aria-label="Next tabs" />
          </PanelTabs>
          <PanelHead>
            <h2>DXF / DWG Output</h2>
            <Icon n="helpBlue" s={11} />
          </PanelHead>
          <Confirm>
            <button aria-label="OK"><Icon n="check" s={12} /></button>
            <button aria-label="Cancel export"><Icon n="cross" s={12} /></button>
          </Confirm>

          <Section $h={54}>
            <Head>Export</Head>
            <Choice><input type="radio" name="kind" disabled defaultChecked />Faces / loops / edges</Choice>
            <Choice><input type="radio" name="kind" disabled />Annotation views</Choice>
          </Section>
          <Section $h={69}>
            <Head>Entities To Export</Head>
            <EntityList>
              <Entity>Face&lt;1&gt;</Entity>
              <Entity $on>Face&lt;2&gt;</Entity>
            </EntityList>
            <DotRow><Dot /></DotRow>
          </Section>
          <Section $h={86}>
            <Head>Output Alignment</Head>
            <AxisRow><AxisName $w={20}><Icon n="origin" /></AxisName><Field $w={119} aria-label="Origin" /></AxisRow>
            <AxisRow><AxisName $w={46}>X axis :</AxisName><Field $w={71} /><Icon n="flip" /></AxisRow>
            <AxisRow><AxisName $w={46}>Y axis :</AxisName><Field $w={71} /><Icon n="flip" /></AxisRow>
          </Section>
          <Section $h={60}>
            <Head>Export Options</Head>
            <Choice><input type="radio" name="files" disabled defaultChecked />Single file</Choice>
            <Choice><input type="radio" name="files" disabled />Separate files</Choice>
          </Section>
          <Handle aria-label="Collapse panel"><Dot /></Handle>
        </Panel>

        <Viewport>
          <Model viewBox="-320 -320 640 640">
            <defs>
              <filter id="soft" x="-20%" y="-20%" width="140%" height="140%">
                <feGaussianBlur stdDeviation="13" />
              </filter>
            </defs>
            <g filter="url(#soft)" opacity=".6">
              <circle r="254" stroke="#000" strokeWidth="52" fill="none" />
              <circle r="142" />
            </g>
            <path d={ring(0, 0, 274, 54) + ring(0, 0, 233, 54)} fillRule="evenodd" fill="#0060bf" stroke="#3f97f2" strokeWidth="1.500" />
            <path d={ring(0, 0, 137, 54)} fill="#0060bf" stroke="#3f97f2" strokeWidth="1.500" />
            {holes.map((d) => (
              <circle key={d} {...onCircle(0, 0, 254, d)} r="6.800" fill="#6b6b6b" stroke="#4a9ff5" strokeWidth="1.500" />
            ))}
          </Model>
          <TreeRoot><Icon n="assembly" />windchimes_hanger&nbsp; (Def...</TreeRoot>
          <Hud>
            {hud.map(([n, c]) => (
              <React.Fragment key={n}>
                <HudButton aria-label={n}><Icon n={n} /></HudButton>
                {c && <HudCaret aria-label={`${n} options`}><Caret $c="#8a8a8a" /></HudCaret>}
              </React.Fragment>
            ))}
          </Hud>
          <DocControls>
            {["paneL", "paneR", "minL", "restoreL", "closeL"].map((n) => (
              <HudButton key={n} aria-label={n}><Icon n={n} s={11} /></HudButton>
            ))}
          </DocControls>
          <Corner viewBox="0 0 54 42" aria-hidden="true">
            <path d="m4 9 6 6L21 3" fill="none" stroke="#c6dfc9" strokeWidth="5" />
            <path d="m38 24 13 13m0-13L38 37" fill="none" stroke="#e8bfc3" strokeWidth="5.500" />
          </Corner>
          <TaskPane>
            {pane.map((n, i) => <PaneButton key={n} $on={i === 0} aria-label={n}><Icon n={n} /></PaneButton>)}
          </TaskPane>
          <Triad>
            <svg width="56" height="36" viewBox="0 0 56 36">
              <path d="M22 6h16" stroke="#c22" strokeWidth="2.500" />
              <path d="m37 3 7 3-7 3z" fill="#c01818" />
              <path d="M22 7v14" stroke="#33b" strokeWidth="2.500" />
              <path d="m19 20 3 8 3-8z" fill="#1a1aa0" />
              <circle cx="22" cy="6" r="3.200" fill="#0b4d12" />
              <path d="m44 3 4 6m0-6-4 6" stroke="#f55" />
              <path d="M20 28h3l-3 6h4" fill="none" stroke="#55f" />
            </svg>
            *Top
          </Triad>
        </Viewport>
      </Workspace>

      <ModelTabs>
        {navArrows.map((d) => (
          <NavButton key={d} aria-label="Scroll tabs">
            <Glyph $s={8} viewBox="0 0 10 10"><path d={d} fill="#999" stroke="#999" /></Glyph>
          </NavButton>
        ))}
        <ModelTab $on>Model</ModelTab>
        <ModelTab>3D Views</ModelTab>
        <ModelTab>Motion Study 1</ModelTab>
      </ModelTabs>
      <StatusBar>
        <StatusText>windchimes_hanger</StatusText>
        <StatusText $r={8}>Processing...</StatusText>
        <StatusText $r={21}>Editing Part</StatusText>
        <StatusText $r={61}><Icon n="rebuild" s={12} /></StatusText>
        <StatusText $dim>IPS</StatusText>
        <UnitsCaret />
        <Icon n="tag" s={12} />
      </StatusBar>
      <TaskBar>
        <Task aria-label="Start"><Icon n="windows" s={13} /></Task>
        <Task aria-label="Search"><Icon n="searchW" s={12} /></Task>
        <Task aria-label="Task view"><Icon n="taskview" s={13} /></Task>
        <Task aria-label="Folder"><Icon n="folder" /></Task>
        <Task $run aria-label="Chrome"><Icon n="chrome" s={17} /></Task>
        <Task $run aria-label="Maker"><Icon n="greenP" /></Task>
        <Task $run $active={24}><SwTile>SW<small>2020</small></SwTile></Task>
        <Task $run aria-label="Inkscape"><Icon n="inkscape" s={15} /></Task>
        <Task $run $active={12} aria-label="File Explorer"><Icon n="explorer" s={17} /></Task>
        <Task $run aria-label="Paint"><Icon n="paint" s={17} /></Task>
        <Tray>
          <TrayButton $r={13} aria-label="People"><Icon n="people" s={12} /></TrayButton>
          <TrayButton aria-label="Hidden icons"><Icon n="up" s={10} /></TrayButton>
          <TrayButton aria-label="Network"><Icon n="net" s={13} /></TrayButton>
          <TrayButton $r={4} aria-label="Volume"><Icon n="sound" s={13} /></TrayButton>
          <Clock>4:45 PM<br />6/7/2021</Clock>
          <TrayButton $r={18} aria-label="Notifications"><Icon n="note" s={12} /><Badge>1</Badge></TrayButton>
        </Tray>
      </TaskBar>

      <Overlay>
        <Dialog role="dialog" aria-labelledby="cleanup">
          <DialogTitle id="cleanup">DXF/DWG Cleanup - windchimes_hanger</DialogTitle>
          <DialogTools>
            {["eraseView", "zFit", "zArea", "zInOut", "pan"].map((n) => (
              <ToolButton key={n} aria-label={n}><Icon n={n} s={13} /></ToolButton>
            ))}
          </DialogTools>
          <Preview viewBox="501 240 398 295" fill="none" stroke="#d9d9d9">
            {[144.500, 122.500, 72.500].map((r) => <path key={r} d={ring(700.500, 388, r, 40)} />)}
            {holes.map((d) => <circle key={d} {...onCircle(700.500, 388, 133.500, d)} r="3.600" />)}
            <circle cx="700.500" cy="388" r="3.600" />
            <path d="M700.500 388v-17m-3 4 3-5 3 5M701 388h17m-4-3 5 3-5 3" stroke="#00c000" />
            <path d="m698 361 2.500 3v3.500m0-3.500 2.500-3M721 386l5 4m0-4-5 4" stroke="#0000a0" />
          </Preview>
          <DialogActions>
            <ActionButton $w={98}>Remove Entities</ActionButton>
            <ToolButton $off aria-label="Undo"><Icon n="undoB" s={12} /></ToolButton>
            <ToolButton $off aria-label="Redo"><Icon n="redoB" s={12} /></ToolButton>
            <ActionButton $w={54} $end>Save</ActionButton>
            <ActionButton $w={54}>Cancel</ActionButton>
          </DialogActions>
        </Dialog>
      </Overlay>
    </Shell>
  );
}
